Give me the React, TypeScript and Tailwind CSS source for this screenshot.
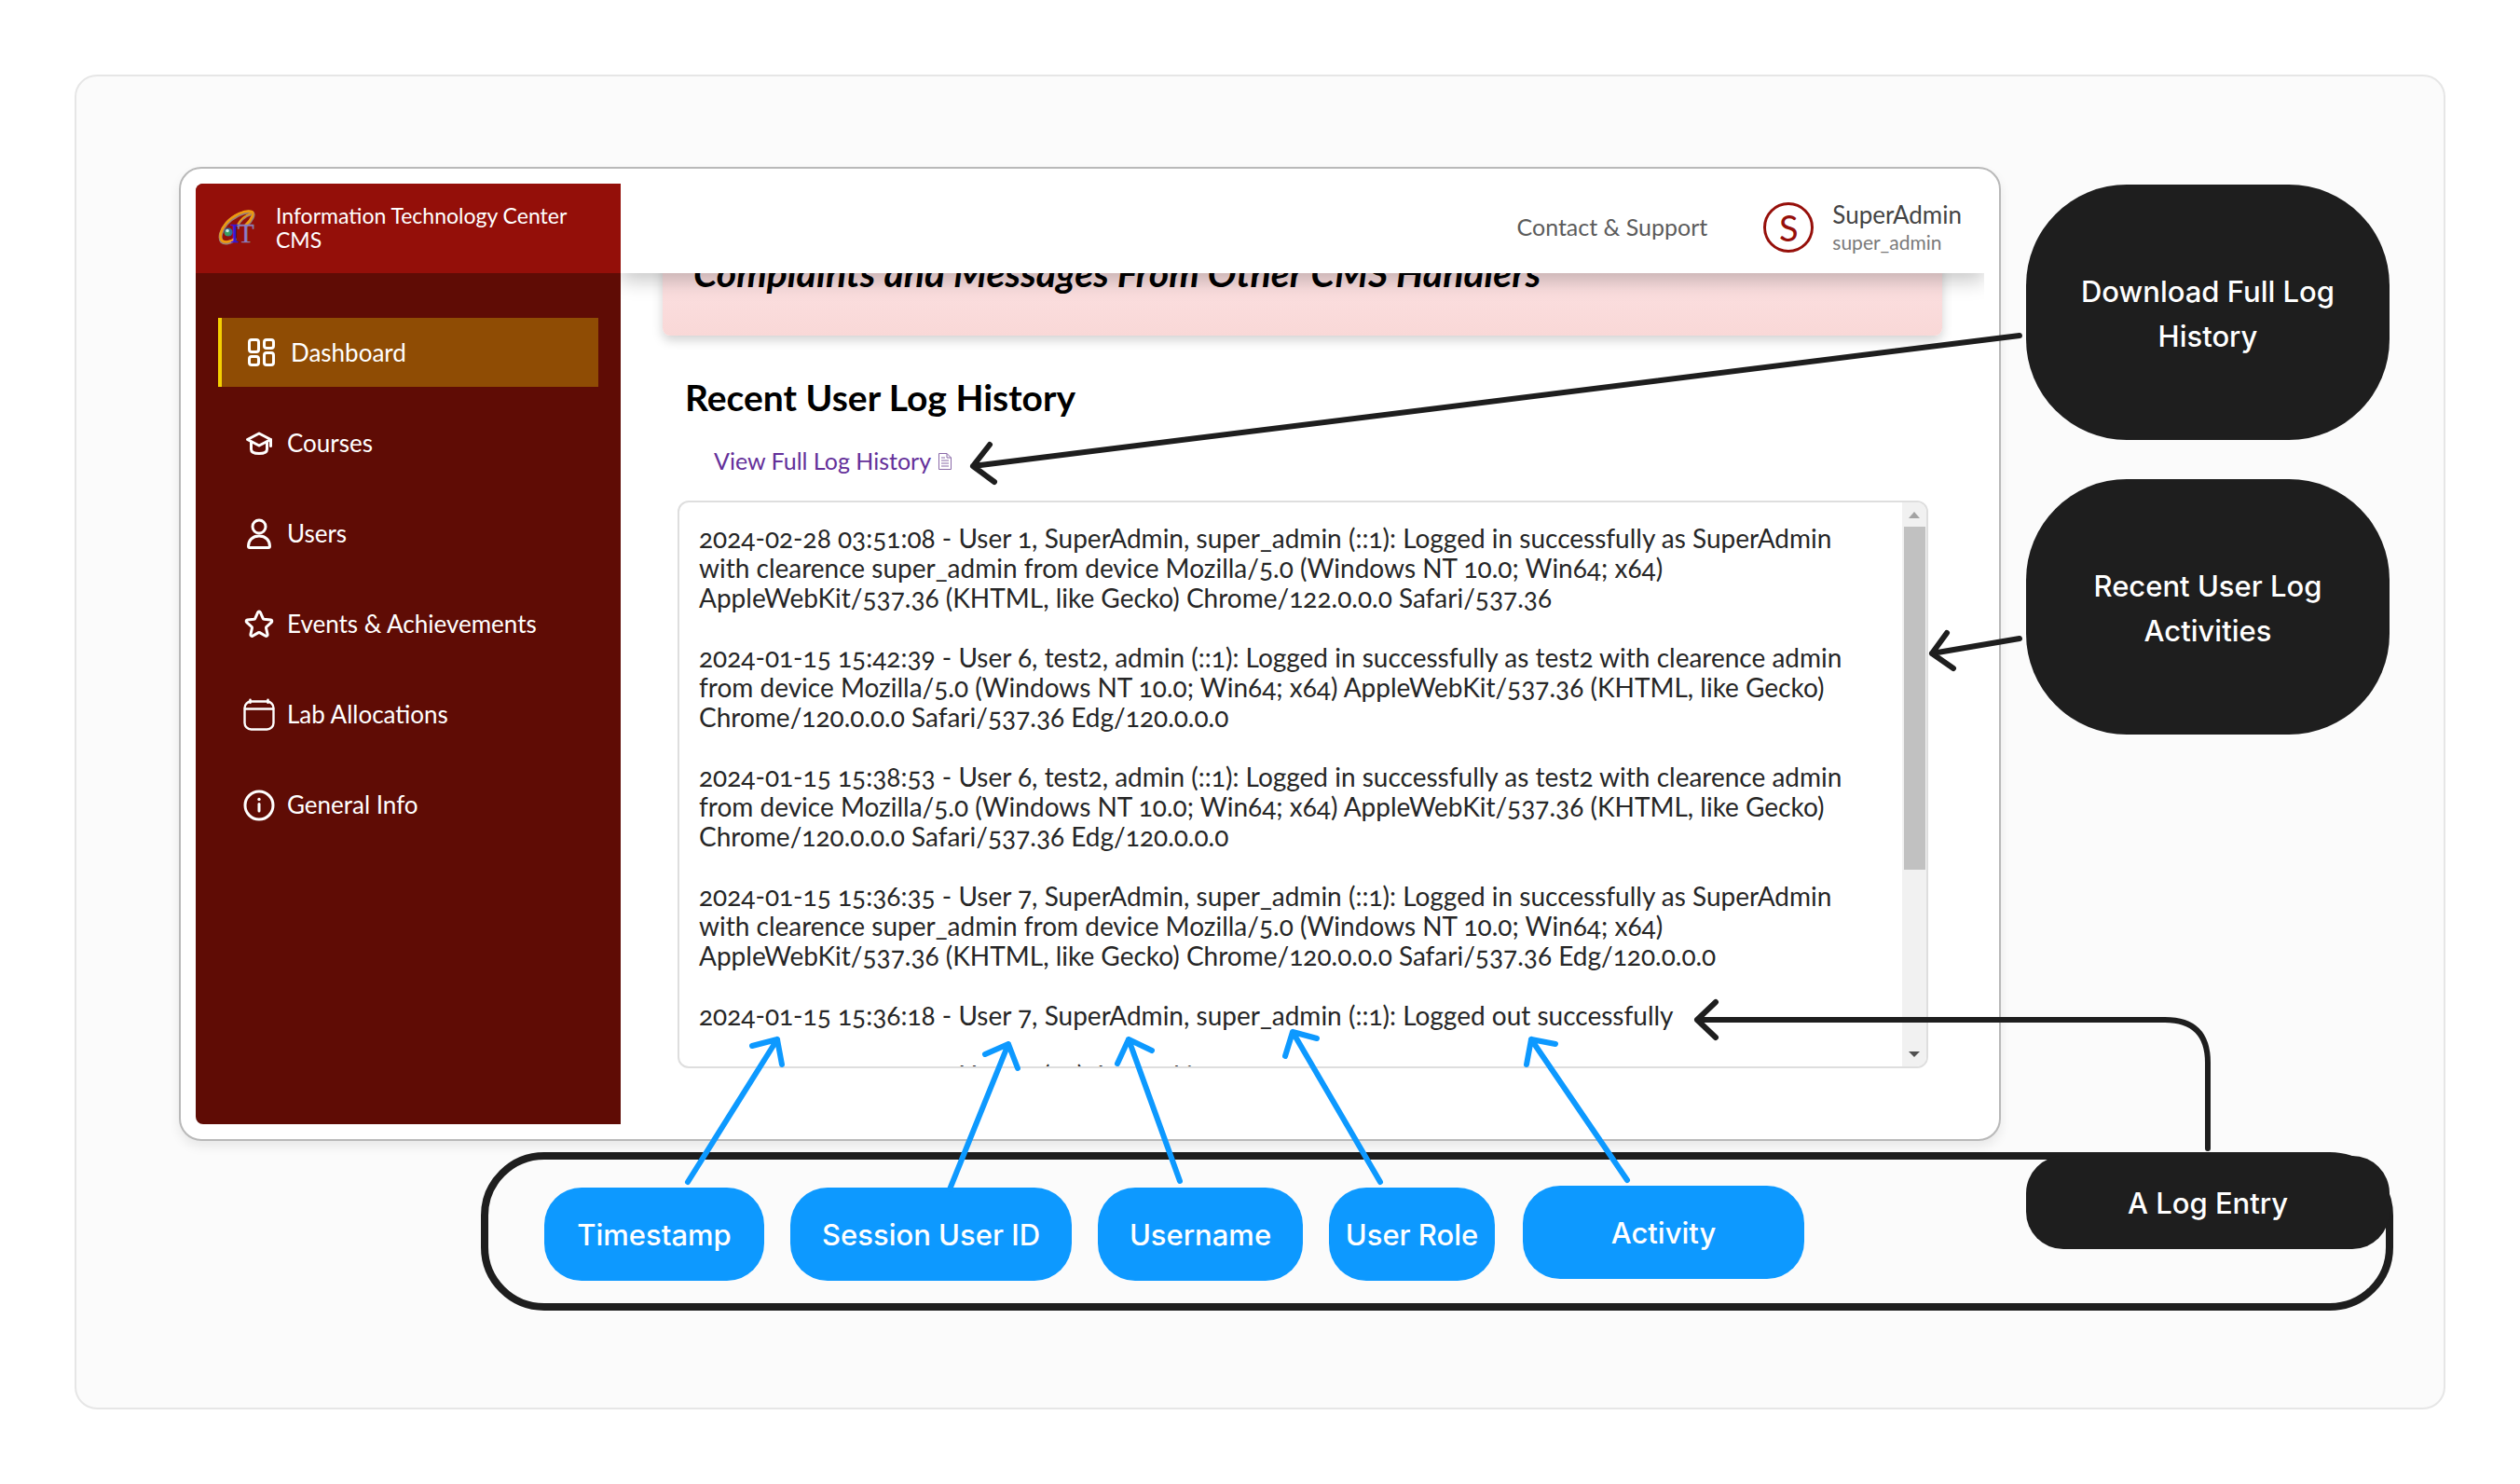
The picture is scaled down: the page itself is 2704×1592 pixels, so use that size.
import type { ReactNode } from "react";

const sans = "font-['Lato',sans-serif]";

function Icon({ children }: { children: ReactNode }) {
  return (
    <svg viewBox="0 0 36 36" className="size-9" fill="none" stroke="#fff" strokeWidth="3" strokeLinecap="round" strokeLinejoin="round" aria-hidden="true">
      {children}
    </svg>
  );
}

const navItems: { label: string; icon: ReactNode }[] = [
  {
    label: "Courses",
    icon: (
      <Icon>
        <path d="M5.500 13.500 18 7l12.500 6.500L18 20 5.500 13.500Z" />
        <path d="M9.500 16v8c0 3 3 4.500 8.500 4.500s8.500-1.500 8.500-4.500v-8" />
        <path d="M30.500 13.500v7" />
      </Icon>
    ),
  },
  {
    label: "Users",
    icon: (
      <Icon>
        <circle cx="18" cy="10" r="7" />
        <path d="M6.500 31c0-6.500 4.500-11 11.500-11s11.500 4.500 11.500 11c0 1-.5 1.500-1.500 1.500H8c-1 0-1.500-.5-1.500-1.500Z" />
      </Icon>
    ),
  },
  {
    label: "Events & Achievements",
    icon: (
      <Icon>
        <path d="M16.700 4.800c.5-1.200 2.100-1.200 2.600 0l2.900 6.600c.2.500.7.800 1.200.9l7.100.7c1.300.1 1.800 1.700.8 2.600l-5.300 4.700c-.4.400-.6.900-.5 1.400l1.600 6.900c.3 1.300-1.100 2.200-2.200 1.600l-6.200-3.600a1.400 1.400 0 0 0-1.400 0l-6.200 3.600c-1.100.7-2.500-.3-2.200-1.600l1.600-6.900c.1-.5-.1-1-.5-1.400l-5.300-4.700c-1-.9-.5-2.500.8-2.600l7.100-.7c.5-.1 1-.4 1.200-.9l2.900-6.600Z" />
      </Icon>
    ),
  },
  {
    label: "Lab Allocations",
    icon: (
      <Icon>
        <g strokeWidth="2.400">
          <rect x="2.500" y="3.500" width="31" height="30" rx="7" />
          <path d="M3 11.500h30" />
          <path d="M8.500 1.800v3M27.500 1.800v3" strokeWidth="2.600" />
        </g>
      </Icon>
    ),
  },
  {
    label: "General Info",
    icon: (
      <Icon>
        <circle cx="18" cy="18" r="15" strokeWidth="3" />
        <path d="M18 16.500v7.500" />
        <circle cx="18" cy="11.500" r="1.700" fill="#fff" stroke="none" />
      </Icon>
    ),
  },
];

const logEntries: string[][] = [
  [
    "2024-02-28 03:51:08 - User 1, SuperAdmin, super_admin (::1): Logged in successfully as SuperAdmin",
    "with clearence super_admin from device Mozilla/5.0 (Windows NT 10.0; Win64; x64)",
    "AppleWebKit/537.36 (KHTML, like Gecko) Chrome/122.0.0.0 Safari/537.36",
  ],
  [
    "2024-01-15 15:42:39 - User 6, test2, admin (::1): Logged in successfully as test2 with clearence admin",
    "from device Mozilla/5.0 (Windows NT 10.0; Win64; x64) AppleWebKit/537.36 (KHTML, like Gecko)",
    "Chrome/120.0.0.0 Safari/537.36 Edg/120.0.0.0",
  ],
  [
    "2024-01-15 15:38:53 - User 6, test2, admin (::1): Logged in successfully as test2 with clearence admin",
    "from device Mozilla/5.0 (Windows NT 10.0; Win64; x64) AppleWebKit/537.36 (KHTML, like Gecko)",
    "Chrome/120.0.0.0 Safari/537.36 Edg/120.0.0.0",
  ],
  [
    "2024-01-15 15:36:35 - User 7, SuperAdmin, super_admin (::1): Logged in successfully as SuperAdmin",
    "with clearence super_admin from device Mozilla/5.0 (Windows NT 10.0; Win64; x64)",
    "AppleWebKit/537.36 (KHTML, like Gecko) Chrome/120.0.0.0 Safari/537.36 Edg/120.0.0.0",
  ],
  ["2024-01-15 15:36:18 - User 7, SuperAdmin, super_admin (::1): Logged out successfully"],
  ["2024-01-15 15:35:59 - User , , (::1): Logged in"],
];

function Logo() {
  return (
    <svg viewBox="0 0 40 40" className="size-10 overflow-visible" aria-label="CIT" role="img">
      <g fill="none" strokeLinecap="round">
        <path d="M30 18C36 13 40 5 36 4 30 2 17 7 9 16 3 23 1 31 4 35c3 3 10 1 14-2" stroke="#9a8078" strokeWidth="4" />
        <path d="M30 17C36 12 39 4 36 3 30 1 17 6 9 15 3 22 1 30 4 34c3 3 10 1 14-2" stroke="#f09a0c" strokeWidth="2.600" />
        <path d="M21 18C24 12 29 8 35 6" stroke="#9a8078" strokeWidth="2.600" />
        <path d="M21 17C24 11 29 7 35 5" stroke="#f09a0c" strokeWidth="1.600" />
      </g>
      <circle cx="11" cy="25" r="4.600" fill="#2f6f9a" />
      <circle cx="10" cy="26" r="3" fill="#3aa060" />
      <circle cx="10" cy="23.500" r="1.800" fill="#c8ece4" />
      <g fontFamily="Liberation Serif, serif" fontSize="29" stroke="#8a80a0" strokeWidth=".5">
        <text x="13" y="36" fill="#3418d8" stroke="#3418d8">
          I
        </text>
        <text x="21" y="36" fill="#8a7ad0">
          T
        </text>
      </g>
    </svg>
  );
}

function Sidebar() {
  return (
    <aside className="flex w-[456px] shrink-0 flex-col overflow-hidden rounded-l-lg bg-[#5f0c05] text-white">
      <div className="flex h-24 items-center gap-[22px] bg-[#940f09] px-6 pb-0.5">
        <Logo />
        <p className="text-[23px] leading-[26px]">
          Information Technology Center
          <br />
          CMS
        </p>
      </div>
      <nav className="flex flex-col gap-6 px-6 pt-12">
        <a href="#dashboard" className="flex h-[74px] items-center gap-[14px] border-l-4 border-[#f5d000] bg-[#8f4c04] pl-6 text-[26px]">
          <Icon>
            <rect x="5.500" y="4.500" width="10" height="13" rx="2.500" />
            <rect x="21.500" y="4.500" width="10" height="9" rx="2.500" />
            <rect x="5.500" y="22.500" width="10" height="9" rx="2.500" />
            <rect x="21.500" y="18.500" width="10" height="13" rx="2.500" />
          </Icon>
          Dashboard
        </a>
        {navItems.map((item) => (
          <a key={item.label} href="#section" className="flex h-[73px] items-center gap-3 pl-[26px] text-[26px]">
            {item.icon}
            {item.label}
          </a>
        ))}
      </nav>
    </aside>
  );
}

function TopBar() {
  return (
    <header className="relative z-10 flex h-24 items-center justify-end bg-white pr-6 pb-0.5 shadow-[0_8px_20px_rgba(0,0,0,0.22)]">
      <a href="#contact" className="mr-[60px] text-[25px] text-[#5c5c5c]">
        Contact &amp; Support
      </a>
      <span className="mr-5 flex size-[54px] items-center justify-center rounded-full border-[3px] border-[#960f0a] text-[38px] text-[#960f0a]">S</span>
      <div>
        <p className="text-[26px] leading-8 text-[#444]">SuperAdmin</p>
        <p className="text-[21px] leading-7 text-[#7a7a7a]">super_admin</p>
      </div>
    </header>
  );
}

function LogBox() {
  return (
    <div className="mr-[60px] ml-[61px] flex h-[609px] overflow-hidden rounded-xl border-2 border-[#dedede] bg-white">
      <div className="flex min-w-0 flex-1 flex-col gap-8 overflow-hidden pt-[22px] pl-[21px] text-[28px] leading-8 whitespace-nowrap text-[#262626] oldstyle-nums">
        {logEntries.map((lines) => (
          <p key={lines[0]}>
            {lines.map((line) => (
              <span key={line} className="block">
                {line}
              </span>
            ))}
          </p>
        ))}
      </div>
      <div className="flex w-[26px] flex-col items-center bg-[#f1f1f1]" aria-hidden="true">
        <svg viewBox="0 0 26 26" className="size-[26px]">
          <path d="M7 17l6-7 6 7z" fill="#a3a3a3" />
        </svg>
        <div className="h-[368px] w-[23px] bg-[#c1c1c1]" />
        <svg viewBox="0 0 26 26" className="mt-auto size-[26px]">
          <path d="M7 10l6 6 6-6z" fill="#505050" />
        </svg>
      </div>
    </div>
  );
}

function AppWindow() {
  return (
    <div className="min-w-0 flex-1 rounded-3xl border-2 border-[#b9b9b9] bg-white p-4 shadow-[0_6px_12px_rgba(0,0,0,0.08)]">
      <div className="flex">
        <Sidebar />
        <div className="min-w-0 flex-1 overflow-hidden">
          <TopBar />
          <main className="pb-[60px]">
            <div className="-mt-20 mr-[45px] ml-[45px] h-[147px] rounded-lg bg-linear-to-b from-[#ffeaee] to-[#f9d8d7] pt-[60px] pl-[33px] shadow-[0_5px_12px_rgba(0,0,0,0.18)]">
              <p className="text-[41px] leading-10 font-bold whitespace-nowrap text-black italic">Complaints and Messages From Other CMS Handlers</p>
            </div>
            <h2 className="mt-[42px] ml-[69px] text-[39px] leading-12 font-bold text-black">Recent User Log History</h2>
            <a href="#log" className="mt-[27px] mb-6 ml-[100px] flex h-9 items-center gap-2 text-[25px] text-[#64309a]">
              View Full Log History
              <svg viewBox="0 0 14 18" className="h-[18px] w-[14px]" fill="none" stroke="#8a6aa8" aria-hidden="true">
                <path d="M.5.5h8.500l4.500 4.500v12.500H.5zM9 .5V5h4.500M3 5h4M3 8h8M3 11h8M3 14h8" />
              </svg>
            </a>
            <LogBox />
          </main>
        </div>
      </div>
    </div>
  );
}

function NoteCard({ children }: { children: ReactNode }) {
  return (
    <div className="flex h-[274px] items-center justify-center rounded-[108px] bg-[#1e1e1e] px-12 pt-1 text-center text-[31px] leading-12 font-medium text-white">
      {children}
    </div>
  );
}

function Tag({ children, className }: { children: ReactNode; className: string }) {
  return <div className={`flex h-[100px] shrink-0 items-center justify-center rounded-[40px] bg-[#0d99ff] pt-0.5 ${className}`}>{children}</div>;
}

function Arrows() {
  return (
    <svg className="pointer-events-none absolute top-0 left-0 h-full w-full" fill="none" strokeWidth="6" strokeLinecap="round" strokeLinejoin="round" aria-hidden="true">
      <g stroke="#1e1e1e">
        <path d="M2167 360 1044 500M1062 477 1044 500 1067 517" />
        <path d="M2167 685 2073 701M2089 679 2073 701 2096 717" />
        <path d="M2369 1232V1140Q2369 1094 2323 1094H1821M1841 1075 1821 1094 1841 1113" />
      </g>
      <g stroke="#0d99ff">
        <path d="M738 1268 834 1115M807 1122 834 1115 839 1142" />
        <path d="M1019 1276 1082 1120M1057 1131 1082 1120 1092 1146" />
        <path d="M1266 1267 1211 1115M1199 1141 1211 1115 1236 1127" />
        <path d="M1481 1268 1387 1107M1379 1133 1387 1107 1413 1114" />
        <path d="M1746 1266 1643 1115M1638 1142 1643 1115 1669 1120" />
      </g>
    </svg>
  );
}

export default function App() {
  return (
    <div className={`relative bg-white p-20 ${sans}`}>
      <div className="rounded-3xl border-2 border-[#e6e6e6] bg-[#fbfbfb] pt-[97px] pr-[58px] pb-[104px] pl-[110px]">
        <div className="flex gap-[27px]">
          <AppWindow />
          <div className="flex w-[390px] shrink-0 flex-col gap-[42px] pt-[19px] font-['Inter',sans-serif]">
            <NoteCard>Download Full Log History</NoteCard>
            <NoteCard>Recent User Log Activities</NoteCard>
          </div>
        </div>
        <div className="mt-3 -mr-1 ml-[324px] flex h-[170px] rounded-[68px] border-8 border-[#1e1e1e] pl-[60px] font-['Inter',sans-serif] text-[31px] font-medium text-white">
          <div className="flex gap-7 pt-[30px]">
            <Tag className="w-[236px]">Timestamp</Tag>
            <Tag className="w-[302px]">Session User ID</Tag>
            <Tag className="w-[220px]">Username</Tag>
            <Tag className="w-[178px]">User Role</Tag>
            <Tag className="-mt-0.5 ml-0.5 w-[302px]">Activity</Tag>
          </div>
          <div className="-mt-1 -mr-1 ml-auto flex h-[100px] w-[390px] items-center justify-center rounded-[40px] bg-[#1e1e1e] pt-0.5">A Log Entry</div>
        </div>
      </div>
      <Arrows />
    </div>
  );
}
